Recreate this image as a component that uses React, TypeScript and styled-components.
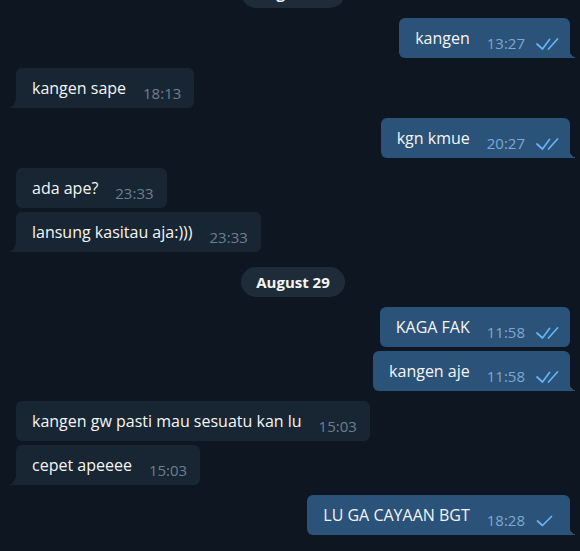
import React from 'react';
import styled, { createGlobalStyle } from 'styled-components';

const GlobalStyle = createGlobalStyle`
    html, body {
        margin: 0;
        padding: 0;
        background-color: #0e1621;
        overflow: hidden;
    }
    body {
        font-family: "Open Sans", "Liberation Sans", sans-serif;
        -webkit-font-smoothing: antialiased;
    }
`;

const Chat = styled.div`
    width: 580px;
    height: 551px;
    box-sizing: border-box;
    padding: 0 10px 0 16px;
    display: flex;
    flex-direction: column;
    gap: 10px;
    overflow: hidden;
`;

interface IDatePill {
    offset?: number;
}

const DatePill = styled.div<IDatePill>`
    align-self: center;
    height: 30px;
    line-height: 30px;
    margin-top: ${(props) => props.offset || 0}px;
    padding: 0 15px;
    border-radius: 15px;
    background-color: #1e2c3a;
    color: #f5f5f5;
    font-size: 15px;
    font-weight: 700;
    flex-shrink: 0;
`;

interface IGroup {
    out?: boolean;
}

const Group = styled.div<IGroup>`
    display: flex;
    flex-direction: column;
    align-items: ${(props) => (props.out ? 'flex-end' : 'flex-start')};
    gap: 4px;
    flex-shrink: 0;
`;

interface IBubble {
    out?: boolean;
    tail?: boolean;
}

const Bubble = styled.div<IBubble>`
    position: relative;
    display: flex;
    align-items: flex-start;
    padding: 10px ${(props) => (props.out ? 11 : 13)}px 5px 16px;
    border-radius: 6px;
    background-color: ${(props) => (props.out ? '#2b5278' : '#182533')};
    ${(props) => props.tail && (props.out ? 'border-bottom-right-radius: 0;' : 'border-bottom-left-radius: 0;')}

    &::after {
        content: '';
        display: ${(props) => (props.tail ? 'block' : 'none')};
        position: absolute;
        bottom: 0;
        width: 8px;
        height: 10px;
        ${(props) =>
            props.out
                ? `right: -7px;
                   background: radial-gradient(ellipse 100% 100% at 100% 0, transparent 97%, #2b5278 100%);`
                : `left: -8px;
                   background: radial-gradient(ellipse 100% 100% at 0 0, transparent 97%, #182533 100%);`}
    }
`;

const Text = styled.span`
    font-size: 16px;
    line-height: 20px;
    color: #f5f5f5;
    white-space: nowrap;
`;

interface IMeta {
    out?: boolean;
}

const Meta = styled.span<IMeta>`
    display: flex;
    align-items: flex-start;
    margin: 5px 0 0 17px;
    font-size: 15px;
    line-height: 20px;
    color: ${(props) => (props.out ? '#7da8d3' : '#6d7f8f')};
    white-space: nowrap;
`;

const Check = styled.svg`
    margin-left: 11px;
    margin-top: 5px;
    fill: none;
    stroke: #65b4f3;
    stroke-width: 1.7;
    stroke-linecap: round;
    stroke-linejoin: round;
`;

const DoubleCheck = () => (
    <Check width="23" height="12" viewBox="0 0 23 12">
        <polyline points="1,6 6.5,11 13.5,1.5" />
        <line x1="12.5" y1="11" x2="21.5" y2="1" />
    </Check>
);

const SingleCheck = () => (
    <Check width="23" height="12" viewBox="0 0 23 12">
        <polyline points="1.5,6 6.5,10.5 15.5,1.5" />
    </Check>
);

type Msg = [string, string, ('one' | 'two')?];

type Item =
    | { kind: 'date'; text: string; offset?: number }
    | { kind: 'group'; out?: boolean; msgs: Msg[] };

const items: Item[] = [
    { kind: 'date', text: 'August 28', offset: -22 },
    { kind: 'group', out: true, msgs: [['kangen', '13:27', 'two']] },
    { kind: 'group', msgs: [['kangen sape', '18:13']] },
    { kind: 'group', out: true, msgs: [['kgn kmue', '20:27', 'two']] },
    { kind: 'group', msgs: [['ada ape?', '23:33'], ['lansung kasitau aja:)))', '23:33']] },
    { kind: 'date', text: 'August 29', offset: 5 },
    { kind: 'group', out: true, msgs: [['KAGA FAK', '11:58', 'two'], ['kangen aje', '11:58', 'two']] },
    { kind: 'group', msgs: [['kangen gw pasti mau sesuatu kan lu', '15:03'], ['cepet apeeee', '15:03']] },
    { kind: 'group', out: true, msgs: [['LU GA CAYAAN BGT', '18:28', 'one']] },
];

const App: React.FC = () => {
    return (
        <>
            <GlobalStyle />
            <Chat>
                {items.map((item, i) =>
                    item.kind === 'date' ? (
                        <DatePill key={i} offset={item.offset}>{item.text}</DatePill>
                    ) : (
                        <Group key={i} out={item.out}>
                            {item.msgs.map(([text, time, status], j) => (
                                <Bubble key={j} out={item.out} tail={j === item.msgs.length - 1}>
                                    <Text>{text}</Text>
                                    <Meta out={item.out}>
                                        {time}
                                        {status === 'two' && <DoubleCheck />}
                                        {status === 'one' && <SingleCheck />}
                                    </Meta>
                                </Bubble>
                            ))}
                        </Group>
                    )
                )}
            </Chat>
        </>
    );
};

export default App;
